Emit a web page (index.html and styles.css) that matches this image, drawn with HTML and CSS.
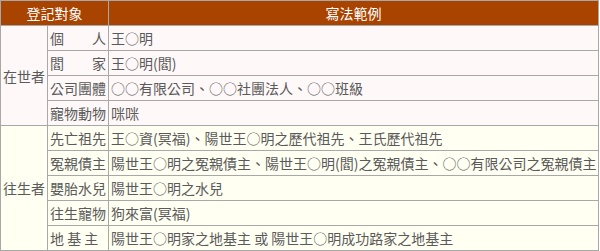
FILE: index.html
```html
<!DOCTYPE html>
<html lang="zh-Hant">
<head>
<meta charset="utf-8">
<link rel="stylesheet" href="styles.css">
</head>
<body>
<table class="reg">
  <colgroup>
    <col class="c1"><col class="c2"><col class="c3">
  </colgroup>
  <thead>
    <tr><th colspan="2">登記對象</th><th>寫法範例</th></tr>
  </thead>
  <tbody class="alive">
    <tr><td rowspan="4" class="grp">在世者</td><td class="kind just">個人</td><td>王○明</td></tr>
    <tr><td class="kind just">閻家</td><td>王○明(閻)</td></tr>
    <tr><td class="kind">公司團體</td><td>○○有限公司、○○社團法人、○○班級</td></tr>
    <tr><td class="kind">寵物動物</td><td>咪咪</td></tr>
  </tbody>
  <tbody class="dead">
    <tr><td rowspan="5" class="grp">往生者</td><td class="kind">先亡祖先</td><td>王○資(冥福)、陽世王○明之歷代祖先、王氏歷代祖先</td></tr>
    <tr><td class="kind">冤親債主</td><td>陽世王○明之冤親債主、陽世王○明(閻)之冤親債主、○○有限公司之冤親債主</td></tr>
    <tr><td class="kind">嬰胎水兒</td><td>陽世王○明之水兒</td></tr>
    <tr><td class="kind">往生寵物</td><td>狗來富(冥福)</td></tr>
    <tr><td class="kind">地 基 主</td><td>陽世王○明家之地基主 或 陽世王○明成功路家之地基主</td></tr>
  </tbody>
</table>
</body>
</html>
```
FILE: styles.css
```css
html, body {
  margin: 0;
  padding: 0;
  background: #ffffff;
}
.reg {
  border-collapse: collapse;
  width: 599px;
  table-layout: fixed;
  font-family: "Noto Sans CJK TC", "Noto Sans", sans-serif;
  font-size: 14px;
  color: #5a5a5a;
}
.c1 { width: 47px; }
.c2 { width: 61px; }
.reg th, .reg td {
  border: 1px solid #a8a8a8;
  height: 24px;
  padding: 0 2px;
  line-height: 20px;
  white-space: nowrap;
  overflow: hidden;
  font-weight: normal;
}
.reg th {
  background: #a84300;
  color: #ffffff;
  text-align: center;
}
.reg td { text-align: left; }
.reg td.grp { text-align: center; padding: 0; }
.reg td.just { text-align: justify; text-align-last: justify; }
.alive td { background: #fff8f8; }
.dead td { background: #fffff2; }
```
